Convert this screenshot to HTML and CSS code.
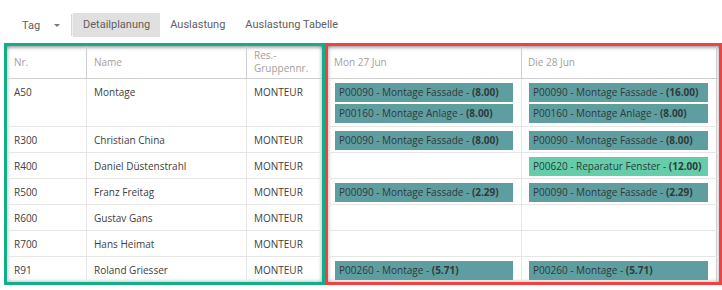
FILE: index.html
```html
<!DOCTYPE html>
<html lang="de">
<head>
<meta charset="utf-8">
<link rel="stylesheet" href="styles.css">
</head>
<body>
<div class="toolbar">
  <div class="view-select">Tag <span class="caret"></span></div>
  <div class="sep"></div>
  <div class="tab active">Detailplanung</div>
  <div class="tab">Auslastung</div>
  <div class="tab">Auslastung Tabelle</div>
</div>
<div class="panels">
  <div class="panel panel-left">
    <div class="grid grid-left">
      <div class="row head">
        <div class="cell c-nr">Nr.</div>
        <div class="cell c-name">Name</div>
        <div class="cell c-grp"><span>Res.-<br>Gruppennr.</span></div>
      </div>
      <div class="row tall">
        <div class="cell c-nr top">A50</div>
        <div class="cell c-name top">Montage</div>
        <div class="cell c-grp top">MONTEUR</div>
      </div>
      <div class="row"><div class="cell c-nr">R300</div><div class="cell c-name">Christian China</div><div class="cell c-grp">MONTEUR</div></div>
      <div class="row"><div class="cell c-nr">R400</div><div class="cell c-name">Daniel Düstenstrahl</div><div class="cell c-grp">MONTEUR</div></div>
      <div class="row"><div class="cell c-nr">R500</div><div class="cell c-name">Franz Freitag</div><div class="cell c-grp">MONTEUR</div></div>
      <div class="row"><div class="cell c-nr">R600</div><div class="cell c-name">Gustav Gans</div><div class="cell c-grp">MONTEUR</div></div>
      <div class="row"><div class="cell c-nr">R700</div><div class="cell c-name">Hans Heimat</div><div class="cell c-grp">MONTEUR</div></div>
      <div class="row last"><div class="cell c-nr">R91</div><div class="cell c-name">Roland Griesser</div><div class="cell c-grp">MONTEUR</div></div>
    </div>
  </div>
  <div class="panel panel-right">
    <div class="grid grid-right">
      <div class="row head">
        <div class="cell c-day">Mon 27 Jun</div>
        <div class="cell c-day">Die 28 Jun</div>
      </div>
      <div class="row tall">
        <div class="cell c-day ev-cell">
          <div class="ev">P00090 - Montage Fassade - <b>(8.00)</b></div>
          <div class="ev">P00160 - Montage Anlage - <b>(8.00)</b></div>
        </div>
        <div class="cell c-day ev-cell">
          <div class="ev">P00090 - Montage Fassade - <b>(16.00)</b></div>
          <div class="ev">P00160 - Montage Anlage - <b>(8.00)</b></div>
        </div>
      </div>
      <div class="row">
        <div class="cell c-day ev-cell"><div class="ev">P00090 - Montage Fassade - <b>(8.00)</b></div></div>
        <div class="cell c-day ev-cell"><div class="ev">P00090 - Montage Fassade - <b>(8.00)</b></div></div>
      </div>
      <div class="row">
        <div class="cell c-day ev-cell"></div>
        <div class="cell c-day ev-cell"><div class="ev ev-green">P00620 - Reparatur Fenster - <b>(12.00)</b></div></div>
      </div>
      <div class="row">
        <div class="cell c-day ev-cell"><div class="ev">P00090 - Montage Fassade - <b>(2.29)</b></div></div>
        <div class="cell c-day ev-cell"><div class="ev">P00090 - Montage Fassade - <b>(2.29)</b></div></div>
      </div>
      <div class="row">
        <div class="cell c-day ev-cell"></div>
        <div class="cell c-day ev-cell"></div>
      </div>
      <div class="row">
        <div class="cell c-day ev-cell"></div>
        <div class="cell c-day ev-cell"></div>
      </div>
      <div class="row last">
        <div class="cell c-day ev-cell"><div class="ev">P00260 - Montage - <b>(5.71)</b></div></div>
        <div class="cell c-day ev-cell"><div class="ev">P00260 - Montage - <b>(5.71)</b></div></div>
      </div>
    </div>
  </div>
</div>
</body>
</html>
```
FILE: styles.css
```css
* { box-sizing: border-box; }
html, body { margin: 0; padding: 0; background: #fff; }
body { font-family: "Open Sans", "Noto Sans", sans-serif; color: #404040; }

.toolbar {
  display: flex;
  align-items: center;
  height: 43px;
  padding: 7px 0 0 22px;
  font-family: Roboto, sans-serif;
  font-size: 11px;
  color: #606060;
}
.view-select { display: flex; align-items: center; width: 49px; }
.caret {
  margin-left: 14px;
  width: 0; height: 0;
  border-left: 3px solid transparent;
  border-right: 3px solid transparent;
  border-top: 3px solid #777;
}
.sep {
  width: 2px; height: 22px;
  border-left: 1px solid #d8d8d8;
  border-right: 1px solid #f0f0f0;
}
.tab {
  height: 24px;
  line-height: 24px;
  padding: 0 10px;
}
.tab.active { background: #e0e0e0; }

.panels {
  display: flex;
  padding-left: 4px;
}
.panel {
  height: 242px;
  border: 3px solid;
  overflow: hidden;
}
.panel-left { width: 321px; border-color: #12ae8a; }
.panel-right { width: 397px; border-color: #ee4343; }

.grid {
  height: 100%;
  box-shadow: inset 0 0 4px rgba(0,0,0,0.35);
}
.row {
  display: flex;
  height: 26px;
  border-bottom: 1px solid #e6e6e6;
}
.row.head {
  height: 33px;
  border-bottom: 1px solid #cfcfcf;
  color: #a69e9c;
  box-shadow: inset 0 4px 4px -3px rgba(0,0,0,0.3);
}
.row.tall { height: 48px; }
.row.last { border-bottom: none; }

.cell {
  display: flex;
  align-items: center;
  font-size: 10px;
  padding: 0 7px;
  border-right: 1px solid #e6e6e6;
  line-height: 12px;
}
.c-grp span { line-height: 13px; }
.row.head .cell { border-right-color: #cfcfcf; }
.cell.top { align-items: flex-start; padding-top: 7px; }

.c-nr { width: 80px; }
.c-name { width: 160px; }
.c-grp { width: 75px; border-right: none; }

.c-day { width: 194px; }
.grid-right .c-day:last-child { width: 195px; border-right-color: #d0d0d0; }
.row.head .c-day { padding-left: 6px; }

.ev-cell {
  flex-direction: column;
  align-items: stretch;
  justify-content: flex-start;
  padding: 4px 8px 0 7px;
  gap: 2px;
}
.ev {
  height: 19px;
  line-height: 19px;
  background: #5f9ea0;
  color: #2d3b3b;
  padding-left: 4px;
  white-space: nowrap;
  overflow: hidden;
}
.ev b { font-weight: 700; }
.ev-green { background: #66cdaa; }
```
